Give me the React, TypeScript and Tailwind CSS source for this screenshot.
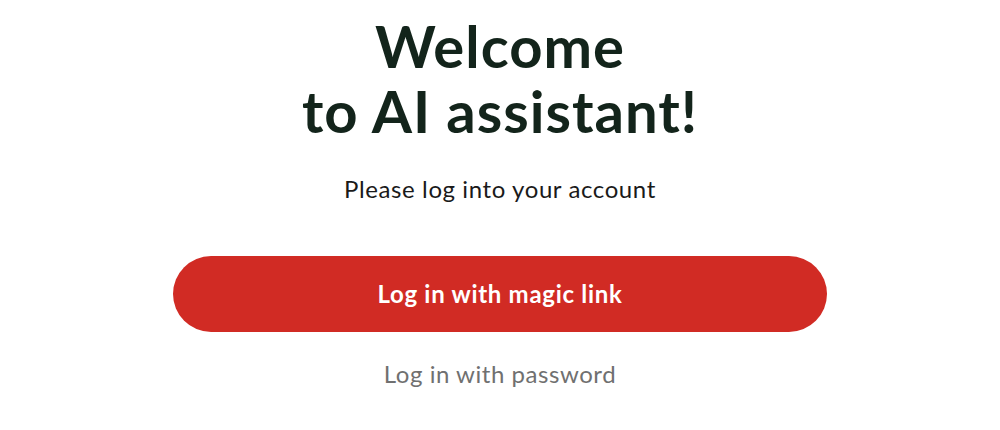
export default function App() {
  return (
    <div
      className="flex min-h-[430px] w-full flex-col items-center bg-white pt-[13px]"
      style={{ fontFamily: "Lato, 'Noto Sans', sans-serif" }}
    >
      <h1 className="text-center text-[58px] font-bold leading-[65px] tracking-[1px] text-[#13241b]">
        Welcome
        <br />
        to AI assistant!
      </h1>
      <p className="mt-[31px] text-[24px] leading-[30px] tracking-[0.6px] text-[#1a1a1a]">Please log into your account</p>
      <button className="mt-[52px] flex h-[76px] w-[654px] items-center justify-center rounded-full bg-[#d12b24] text-[24px] font-bold tracking-[0.7px] text-white">
        Log in with magic link
      </button>
      <button className="mt-[27px] text-[24px] leading-[30px] tracking-[0.55px] text-[#707070]">Log in with password</button>
    </div>
  );
}
